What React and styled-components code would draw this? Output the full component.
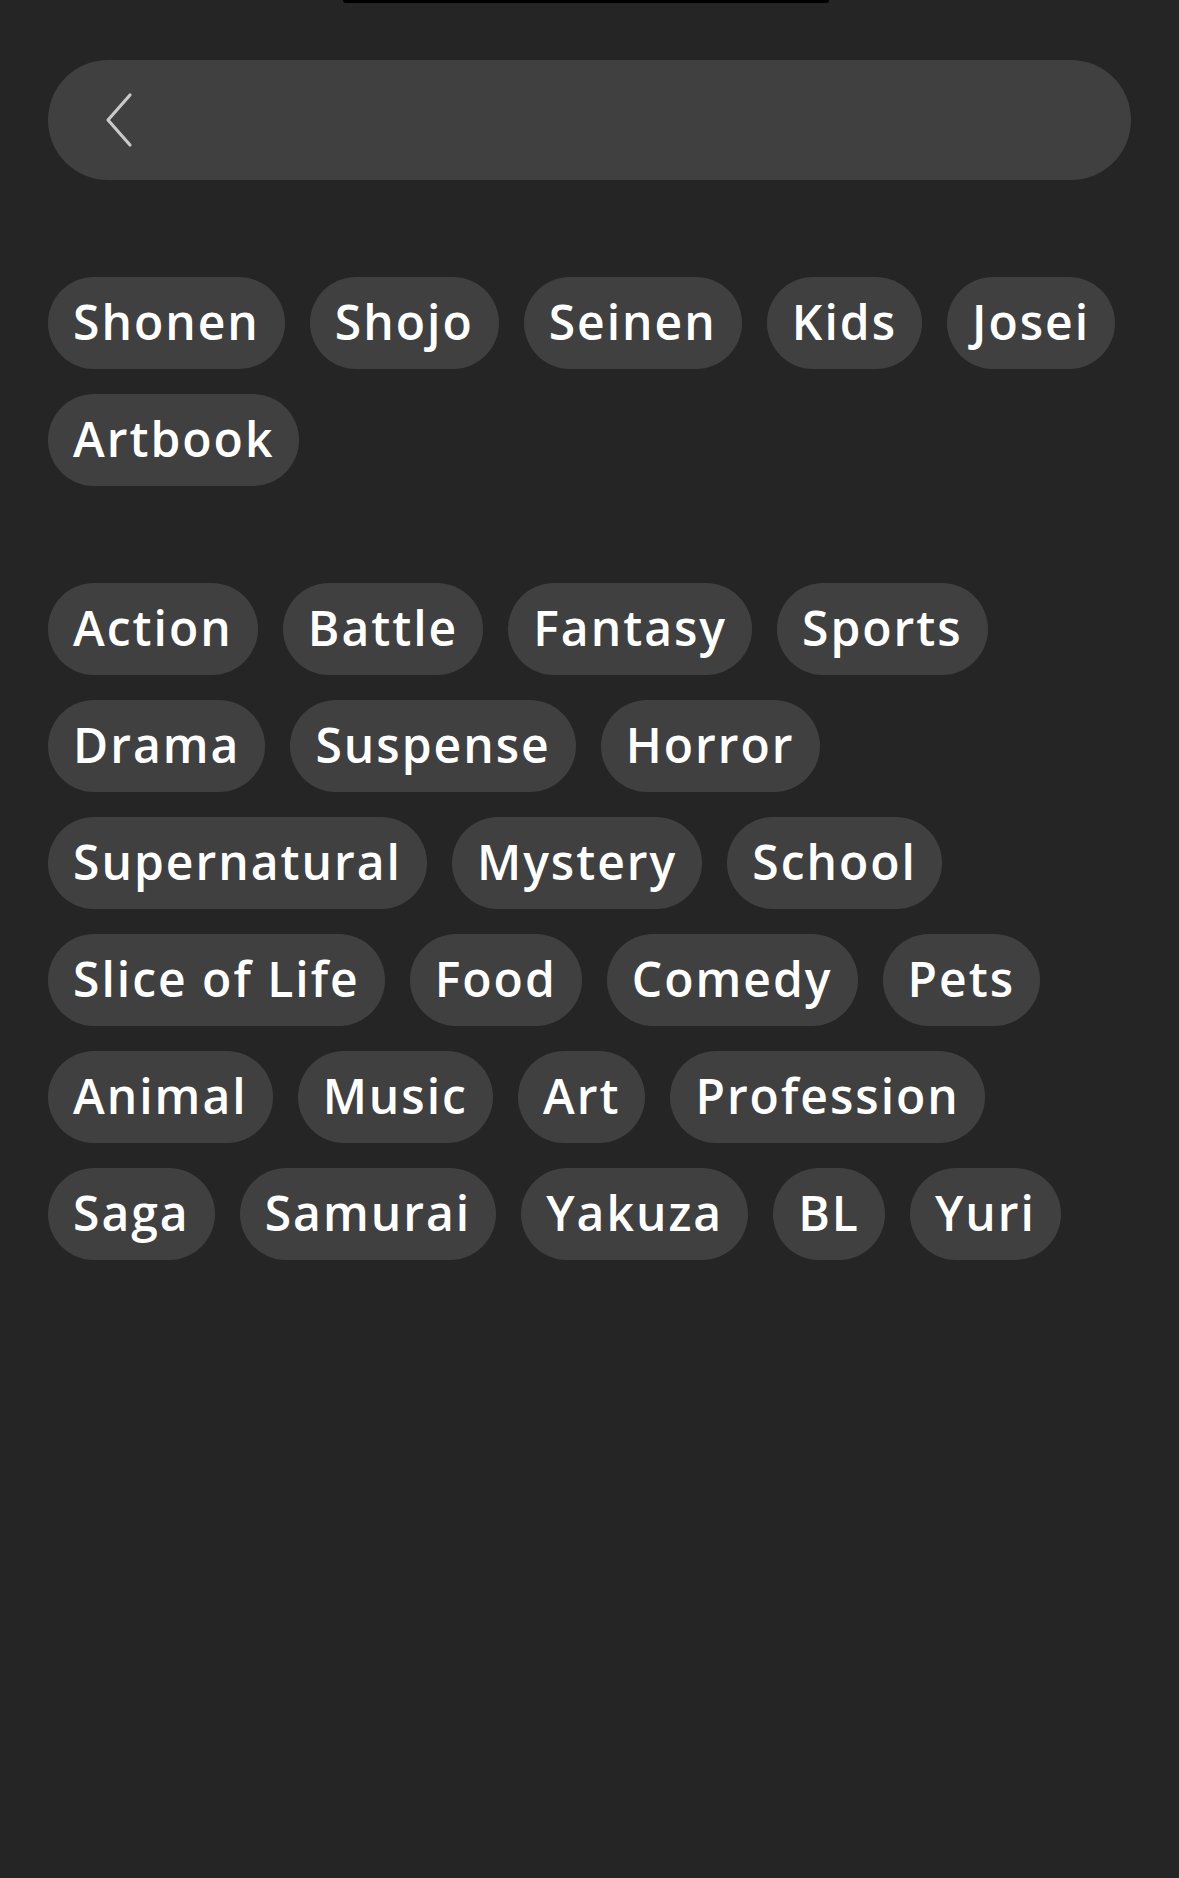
import React from "react";
import styled, { createGlobalStyle } from "styled-components";

const GlobalStyle = createGlobalStyle`
  html, body {
    margin: 0;
    padding: 0;
    background: #252525;
  }
  body {
    font-family: "Open Sans", "Noto Sans", sans-serif;
    -webkit-font-smoothing: antialiased;
  }
`;

const Page = styled.div`
  min-height: 1878px;
  background: #252525;
  display: flex;
  flex-direction: column;
  padding: 0 48px;
`;

const Notch = styled.div`
  align-self: center;
  width: 486px;
  height: 3px;
  background: #000;
  border-radius: 0 0 6px 6px;
  margin-left: -7px;
`;

const SearchBar = styled.div`
  margin-top: 57px;
  height: 120px;
  border-radius: 60px;
  background: #404040;
  display: flex;
  align-items: center;
  padding-left: 56px;
`;

const BackIcon = styled.svg`
  width: 30px;
  height: 56px;
  color: #c9c9c9;
`;

const ChipGroup = styled.div`
  display: flex;
  flex-wrap: wrap;
  gap: 25px;
  margin-top: 97px;
`;

const Chip = styled.div`
  box-sizing: border-box;
  height: 92px;
  padding: 0 25px 3px;
  border-radius: 46px;
  background: #404040;
  color: #fff;
  display: inline-flex;
  align-items: center;
  font-size: 48px;
  font-weight: 600;
  letter-spacing: 2px;
  white-space: nowrap;
`;

const demographics = ["Shonen", "Shojo", "Seinen", "Kids", "Josei", "Artbook"];

const genres = [
  "Action", "Battle", "Fantasy", "Sports",
  "Drama", "Suspense", "Horror",
  "Supernatural", "Mystery", "School",
  "Slice of Life", "Food", "Comedy", "Pets",
  "Animal", "Music", "Art", "Profession",
  "Saga", "Samurai", "Yakuza", "BL", "Yuri",
];

const App = () => {
  return (
    <>
      <GlobalStyle />
      <Page>
        <Notch />
        <SearchBar>
          <BackIcon viewBox="0 0 30 56" fill="none">
            <path
              d="M26 3 L4 28 L26 53"
              stroke="currentColor"
              strokeWidth="3.2"
              strokeLinecap="round"
              strokeLinejoin="round"
            />
          </BackIcon>
        </SearchBar>
        <ChipGroup>
          {demographics.map((d) => (
            <Chip key={d}>{d}</Chip>
          ))}
        </ChipGroup>
        <ChipGroup>
          {genres.map((g) => (
            <Chip key={g}>{g}</Chip>
          ))}
        </ChipGroup>
      </Page>
    </>
  );
};

export default App;
